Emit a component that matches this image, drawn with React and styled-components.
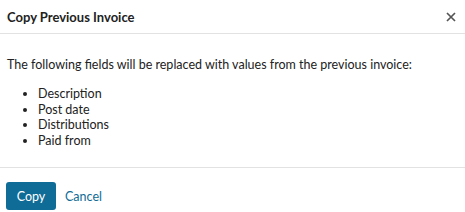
import React from "react";
import styled, { createGlobalStyle } from "styled-components";

const GlobalStyle = createGlobalStyle`
  html, body {
    margin: 0;
    padding: 0;
    background: #fff;
  }
  body {
    font-family: Lato, "Noto Sans", sans-serif;
    color: #222;
  }
`;

const Dialog = styled.div`
  width: 465px;
  height: 212px;
  display: flex;
  flex-direction: column;
  box-sizing: border-box;
`;

const Header = styled.div`
  height: 34px;
  display: flex;
  align-items: center;
  justify-content: space-between;
  padding: 0 7px 0 7px;
  border-bottom: 1px solid #e2e2e2;
  box-sizing: border-box;
`;

const Title = styled.h2`
  margin: 0;
  font-size: 13px;
  font-weight: 700;
  color: #222;
`;

const CloseButton = styled.button`
  border: none;
  background: transparent;
  padding: 0;
  width: 14px;
  height: 14px;
  display: flex;
  align-items: center;
  justify-content: center;
  cursor: pointer;
  color: #555;
`;

const Body = styled.div`
  padding: 23px 7px 0;
  height: 134px;
  box-sizing: border-box;
  border-bottom: 1px solid #e2e2e2;
  font-size: 12.5px;
`;

const Intro = styled.p`
  margin: 0 0 14px;
  line-height: 15px;
`;

const FieldList = styled.ul`
  margin: 0;
  padding-left: 31px;
  line-height: 15.7px;
`;

const Footer = styled.div`
  display: flex;
  align-items: center;
  gap: 9px;
  padding: 14px 6px 0;
`;

const PrimaryButton = styled.button`
  width: 50px;
  height: 28px;
  border: none;
  border-radius: 3px;
  background: #0f6c97;
  color: #fff;
  font-family: Lato, "Noto Sans", sans-serif;
  font-size: 12.5px;
  cursor: pointer;
`;

const LinkButton = styled.button`
  border: none;
  background: transparent;
  padding: 0;
  color: #0f6c97;
  font-family: Lato, "Noto Sans", sans-serif;
  font-size: 12.5px;
  cursor: pointer;
`;

const fields = ["Description", "Post date", "Distributions", "Paid from"];

export default function App() {
  return (
    <Dialog>
      <GlobalStyle />
      <Header>
        <Title>Copy Previous Invoice</Title>
        <CloseButton aria-label="Close">
          <svg width="10" height="10" viewBox="0 0 10 10">
            <path d="M1 1L9 9M9 1L1 9" stroke="currentColor" strokeWidth="1.7" />
          </svg>
        </CloseButton>
      </Header>
      <Body>
        <Intro>The following fields will be replaced with values from the previous invoice:</Intro>
        <FieldList>
          {fields.map((f) => (
            <li key={f}>{f}</li>
          ))}
        </FieldList>
      </Body>
      <Footer>
        <PrimaryButton>Copy</PrimaryButton>
        <LinkButton>Cancel</LinkButton>
      </Footer>
    </Dialog>
  );
}
